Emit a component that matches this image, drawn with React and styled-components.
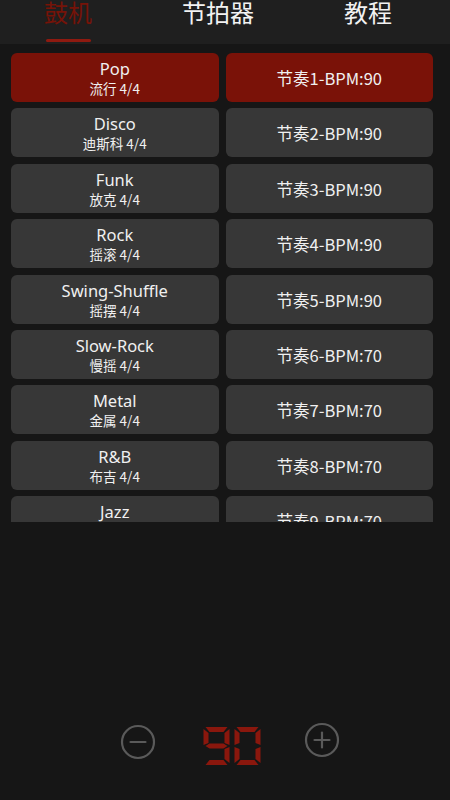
import React from "react";
import styled, { createGlobalStyle } from "styled-components";

const Global = createGlobalStyle`
  html, body { margin: 0; padding: 0; background: #161616; }
  body { font-family: "Noto Sans", "Noto Sans CJK SC", sans-serif; }
  * { box-sizing: border-box; }
`;

const Screen = styled.div`
  width: 450px;
  height: 800px;
  background: #161616;
  display: flex;
  flex-direction: column;
  overflow: hidden;
`;

const TabBar = styled.div`
  height: 44px;
  background: #1f1f1f;
  display: grid;
  grid-template-columns: repeat(3, 150px);
  margin-left: -7px;
  width: 457px;
`;

const Tab = styled.div`
  display: flex;
  flex-direction: column;
  align-items: center;
  font-family: "Noto Sans CJK SC", sans-serif;
  font-size: 24px;
  line-height: 28px;
  margin-top: -2px;
  color: ${(p) => (p.$active ? "#761308" : "#f2f2f2")};
`;

const Underline = styled.div`
  width: 45px;
  height: 3px;
  border-radius: 2px;
  margin-top: 13px;
  background: ${(p) => (p.$active ? "#8f1a10" : "transparent")};
`;

const List = styled.div`
  height: 478px;
  overflow: hidden;
  padding: 9px 17px 0 11px;
  display: grid;
  grid-template-columns: 1fr 1fr;
  grid-auto-rows: 49px;
  column-gap: 7px;
  row-gap: 6.4px;
`;

const Btn = styled.div`
  border-radius: 6px;
  background: ${(p) => (p.$active ? "#7a1208" : "#373737")};
  color: #f0f0f0;
  display: flex;
  flex-direction: column;
  align-items: center;
  justify-content: center;
  gap: 1px;
  padding-top: ${(p) => (p.$two ? 2 : 1)}px;
`;

const Title = styled.div`
  font-size: 16.5px;
  line-height: 18px;
`;

const Sub = styled.div`
  font-family: "Noto Sans CJK SC", sans-serif;
  font-size: 13.5px;
  line-height: 18px;
`;

const Beat = styled.div`
  font-family: "Noto Sans CJK SC", sans-serif;
  font-size: 16.5px;
  line-height: 20px;
`;

const Spacer = styled.div`
  flex: 1;
`;

const Controls = styled.div`
  height: 82px;
  display: flex;
  align-items: flex-start;
  padding-left: 120px;
`;

const IconBtn = styled.div`
  width: 36px;
  height: 36px;
  margin-top: ${(p) => p.$mt}px;
`;

const Display = styled.div`
  width: 58px;
  display: flex;
  justify-content: space-between;
  margin: 9px 43px 0 47px;
`;

const styles = [
  ["Pop", "流行 4/4"],
  ["Disco", "迪斯科 4/4"],
  ["Funk", "放克 4/4"],
  ["Rock", "摇滚 4/4"],
  ["Swing-Shuffle", "摇摆 4/4"],
  ["Slow-Rock", "慢摇 4/4"],
  ["Metal", "金属 4/4"],
  ["R&B", "布吉 4/4"],
  ["Jazz", "爵士 4/4"],
];
const bpms = [90, 90, 90, 90, 90, 70, 70, 70, 70];

const SEG = {
  a: "2,0 24,0 20,5 6,5",
  b: "26,2 26,18 21,16 21,6",
  c: "26,20 26,36 21,32 21,22",
  d: "6,33 20,33 24,38 2,38",
  e: "0,20 5,22 5,32 0,36",
  f: "0,2 5,6 5,16 0,18",
  g: "2,19 6,16.5 20,16.5 24,19 20,21.5 6,21.5",
};
const DIGITS = {
  9: ["a", "b", "c", "d", "f", "g"],
  0: ["a", "b", "c", "d", "e", "f"],
};

const Digit = ({ d }) => (
  <svg width="27" height="38" viewBox="0 0 26 38">
    {DIGITS[d].map((s) => (
      <polygon key={s} points={SEG[s]} fill="#8a170d" />
    ))}
  </svg>
);

const Circle = ({ plus }) => (
  <svg width="36" height="36" viewBox="0 0 36 36" fill="none" stroke="#5a5a5a" strokeWidth="2.2">
    <circle cx="18" cy="18" r="16" />
    <line x1="10.5" y1="18" x2="25.5" y2="18" strokeLinecap="round" />
    {plus && <line x1="18" y1="10.5" x2="18" y2="25.5" strokeLinecap="round" />}
  </svg>
);

export default function App() {
  return (
    <Screen>
      <Global />
      <TabBar>
        <Tab $active>
          鼓机
          <Underline $active />
        </Tab>
        <Tab>节拍器</Tab>
        <Tab>教程</Tab>
      </TabBar>
      <List>
        {styles.map(([t, s], i) => (
          <React.Fragment key={t}>
            <Btn $active={i === 0} $two>
              <Title>{t}</Title>
              <Sub>{s}</Sub>
            </Btn>
            <Btn $active={i === 0}>
              <Beat>{`节奏${i + 1}-BPM:${bpms[i]}`}</Beat>
            </Btn>
          </React.Fragment>
        ))}
      </List>
      <Spacer />
      <Controls>
        <IconBtn $mt={6}>
          <Circle />
        </IconBtn>
        <Display>
          <Digit d={9} />
          <Digit d={0} />
        </Display>
        <IconBtn $mt={4}>
          <Circle plus />
        </IconBtn>
      </Controls>
    </Screen>
  );
}
